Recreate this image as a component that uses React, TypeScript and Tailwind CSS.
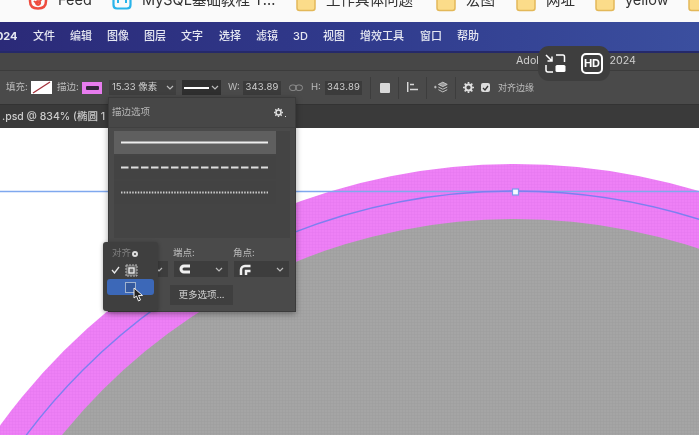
const cjk = "font-['Inter','Noto_Sans_CJK_SC',sans-serif]";

function Folder() {
  return (
    <svg width="20" height="12" viewBox="0 0 20 12" className="shrink-0">
      <path d="M1 -6 H19 V8 Q19 10.500 16.500 10.500 H3.500 Q1 10.500 1 8 Z" fill="#fbdc8a" stroke="#e3b859" strokeWidth="1.500" />
    </svg>
  );
}

function Bookmark({ icon, label, w }: { icon: React.ReactNode; label: string; w: string }) {
  return (
    <div className={`flex items-start gap-[10px] shrink-0 ${w}`}>
      {icon}
      <span className="text-[14.500px] leading-[15px] mt-[-8px] text-[#333] whitespace-nowrap">{label}</span>
    </div>
  );
}

function BookmarkBar() {
  return (
    <div className="h-[22px] bg-[#fafafa] flex pl-[28px] overflow-hidden">
      <Bookmark
        w="w-[84px]"
        label="Feed"
        icon={
          <svg width="20" height="10" viewBox="0 0 20 10" className="shrink-0">
            <path d="M2 -6 V1 Q2 8.500 10 8.500 Q18 8.500 18 1 V-6" fill="none" stroke="#ee4b3e" strokeWidth="2.500" />
            <path d="M6 1 Q10 6 14 -2 M10 1 a2 2 0 1 0 .1 0" fill="none" stroke="#ee4b3e" strokeWidth="2" />
          </svg>
        }
      />
      <Bookmark
        w="w-[184px]"
        label="MySQL基础教程 T..."
        icon={
          <svg width="20" height="10" viewBox="0 0 20 10" className="shrink-0">
            <path d="M1.500 -6 V5 Q1.500 8.500 5 8.500 H15 Q18.500 8.500 18.500 5 V-6" fill="none" stroke="#29b4ea" strokeWidth="2.200" />
            <path d="M6 0 V3 M14 0 V3" stroke="#29b4ea" strokeWidth="2" />
          </svg>
        }
      />
      <Bookmark w="w-[140px]" label="工作具体问题" icon={<Folder />} />
      <Bookmark w="w-[80px]" label="宏图" icon={<Folder />} />
      <Bookmark w="w-[79px]" label="网址" icon={<Folder />} />
      <Bookmark w="w-[93px]" label="yellow" icon={<Folder />} />
      <Folder />
    </div>
  );
}

const menus: [string, string][] = [
  ["文件", "w-[37px]"],
  ["编辑", "w-[37px]"],
  ["图像", "w-[37px]"],
  ["图层", "w-[37px]"],
  ["文字", "w-[38px]"],
  ["选择", "w-[37px]"],
  ["滤镜", "w-[37px]"],
  ["3D", "w-[30px]"],
  ["视图", "w-[37px]"],
  ["增效工具", "w-[60px]"],
  ["窗口", "w-[37px]"],
  ["帮助", "w-[37px]"],
];

function MenuBar() {
  return (
    <div className="h-[31px] bg-gradient-to-r from-[#2b2a78] via-[#303a8c] to-[#3b4f9f] border-b-2 border-[#25296a] flex items-center text-[#e6e8f2] text-[11px] font-medium">
      <span className="w-[33px] shrink-0 font-bold overflow-hidden">
        <span className="block ml-[-11px]">2024</span>
      </span>
      {menus.map(([m, w]) => (
        <span key={m} className={`${w} shrink-0 whitespace-nowrap`}>{m}</span>
      ))}
    </div>
  );
}

function OverlayPill() {
  return (
    <div className="absolute left-[538px] top-[46px] w-[72px] h-[35px] rounded-[11px] bg-[#3e3e3e] flex items-center justify-center gap-[15px]">
      <svg width="21" height="19" viewBox="0 0 21 19" fill="none" stroke="#fff" strokeWidth="1.500">
        <path d="M1 1 L7 7 M7 2.500 V7 H2.500" />
        <path d="M11 1 H18 Q19.500 1 19.500 3 V8" />
        <path d="M1 11 V16 Q1 18 3 18 H8" />
        <rect x="10.500" y="11" width="10" height="7" rx="1.500" fill="#fff" stroke="none" />
      </svg>
      <div className="w-[22px] h-[21px] border-2 border-white rounded-[5px] flex items-center justify-center text-white text-[11px] font-bold leading-none">
        HD
      </div>
    </div>
  );
}

function TitleStrip() {
  return (
    <div className="h-[18px] bg-[#474747] border-b border-[#3c3c3c] flex items-center pl-[516px] text-[10.700px] text-[#cfcfcf] whitespace-nowrap">
      Adobe Photoshop 2024
    </div>
  );
}

function Sep({ cls }: { cls: string }) {
  return <div className={`w-px h-[22px] bg-[#3d3d3d] shrink-0 ${cls}`} />;
}

function Chevron({ c = "#bbbbbb" }: { c?: string }) {
  return (
    <svg width="8" height="5" viewBox="0 0 8 5" fill="none" stroke={c} strokeWidth="1.200" className="shrink-0">
      <path d="M1 1 L4 4 L7 1" />
    </svg>
  );
}

function Num({ v, w }: { v: string; w: string }) {
  return (
    <div className={`${w} h-[14px] bg-[#3b3b3b] flex items-center justify-center text-[#d0d0d0] text-[9.500px] tracking-[0.2px] shrink-0`}>
      {v}
    </div>
  );
}

function OptionsBar() {
  return (
    <div className="h-[33px] bg-[#4a4a4a] flex items-center pl-[6px] text-[9.500px] text-[#bcbcbc] whitespace-nowrap">
      <span className="w-[25px] shrink-0">填充:</span>
      <svg width="21" height="13" viewBox="0 0 21 13" className="shrink-0">
        <rect width="21" height="13" fill="#fff" />
        <path d="M2 12 L19 1" stroke="#a3323c" strokeWidth="1.300" />
      </svg>
      <span className="w-[25px] ml-[5px] shrink-0">描边:</span>
      <div className="w-[20px] h-[12px] bg-[#e77cee] flex items-center justify-center shrink-0">
        <div className="w-[13px] h-[4px] bg-[#33263a] rounded-[1px]" />
      </div>
      <div className="ml-[7px] w-[67px] h-[15px] bg-[#3f3f3f] flex items-center text-[#cfcfcf] shrink-0">
        <span className="pl-[3px] w-[57px]">15.33 像素</span>
        <Chevron />
      </div>
      <div className="ml-[6px] w-[39px] h-[15px] bg-[#2f2f2f] flex items-center gap-[2px] pl-[2px] shrink-0">
        <div className="w-[25px] h-[2px] bg-white" />
        <Chevron />
      </div>
      <span className="ml-[7px] w-[15px] shrink-0">W:</span>
      <Num v="343.89" w="w-[38px]" />
      <svg width="14" height="8" viewBox="0 0 14 8" fill="none" stroke="#8f8f8f" strokeWidth="1" className="ml-[8px] shrink-0">
        <rect x="0.500" y="1" width="7" height="5.500" rx="2.700" />
        <rect x="6.500" y="1" width="7" height="5.500" rx="2.700" />
      </svg>
      <span className="ml-[8px] w-[14px] shrink-0">H:</span>
      <Num v="343.89" w="w-[37px]" />
      <Sep cls="ml-[8px]" />
      <div className="ml-[9px] w-[10px] h-[10px] bg-[#d9d9d9] rounded-[1px] shrink-0" />
      <Sep cls="ml-[8px]" />
      <svg width="12" height="11" viewBox="0 0 12 11" fill="none" stroke="#d8d8d8" className="ml-[8px] shrink-0">
        <path d="M0.700 0 V10 M3 2.500 H7 M3 7.500 H11" strokeWidth="1.500" />
      </svg>
      <Sep cls="ml-[7px]" />
      <svg width="15" height="13" viewBox="0 0 17 13" fill="none" stroke="#d0d0d0" strokeWidth="1" className="ml-[7px] shrink-0">
        <path d="M0 6 H3 M1.500 4.500 V7.500" />
        <path d="M5 3 L10 0.500 L15 3 L10 5.500 Z" fill="#9a9a9a" />
        <path d="M5 6 L10 8.500 L15 6 M5 9 L10 11.500 L15 9" />
      </svg>
      <Sep cls="ml-[6px] mr-[7px]" />
      <Gear size={11} />
      <div className="ml-[7px] w-[9px] h-[9px] bg-[#dcdcdc] rounded-[2px] flex items-center justify-center shrink-0">
        <svg width="7" height="6" viewBox="0 0 7 6" fill="none" stroke="#333" strokeWidth="1.300">
          <path d="M1 3 L3 5 L6 1" />
        </svg>
      </div>
      <span className="ml-[8px] text-[9px] shrink-0">对齐边缘</span>
    </div>
  );
}

function Gear({ size }: { size: number }) {
  return (
    <svg width={size} height={size} viewBox="0 0 12 12" className="shrink-0">
      <circle cx="6" cy="6" r="3.300" fill="none" stroke="#e0e0e0" strokeWidth="2" />
      <path d="M6 0 V2 M6 10 V12 M0 6 H2 M10 6 H12 M1.800 1.800 L3.200 3.200 M8.800 8.800 L10.200 10.200 M1.800 10.200 L3.200 8.800 M8.800 3.200 L10.200 1.800" stroke="#e0e0e0" strokeWidth="1.800" />
    </svg>
  );
}

function TabBar() {
  return (
    <div className="h-[24px] bg-[#3a3a3a] border-t border-[#333] flex items-center pl-[2px] text-[10.500px] font-medium text-[#cdcdcd] whitespace-nowrap overflow-hidden">
      .psd @ 834% (椭圆 1 拷贝, RGB/8#)
    </div>
  );
}

function Canvas() {
  return (
    <svg width="699" height="308" viewBox="0 127 699 308" className="block">
      <defs>
        <pattern id="g" width="3" height="3" patternUnits="userSpaceOnUse">
          <rect width="3" height="3" fill="#a5a5a5" />
          <path d="M0 0 H3 M0 0 V3" stroke="#9a9a9a" strokeWidth="0.800" />
        </pattern>
        <pattern id="p" width="3" height="3" patternUnits="userSpaceOnUse">
          <rect width="3" height="3" fill="#ee80f6" />
          <path d="M0 0 H3 M0 0 V3" stroke="#e276ee" strokeWidth="0.700" />
        </pattern>
      </defs>
      <rect x="0" y="127" width="699" height="308" fill="#fff" />
      <circle cx="515" cy="801" r="638" fill="url(#p)" />
      <circle cx="515" cy="801" r="583" fill="url(#g)" />
      <path d="M0 190.500 H699" stroke="#7fa8ee" strokeWidth="1.500" />
      <circle cx="515" cy="801" r="611" fill="none" stroke="#7d7ff0" strokeWidth="1.400" />
      <rect x="512.500" y="188" width="6" height="6" fill="#f4fbff" stroke="#7a9bec" strokeWidth="1.200" />
    </svg>
  );
}

function StrokeRow({ active, children }: { active?: boolean; children: React.ReactNode }) {
  return (
    <div className={`h-[23px] flex items-center px-[7px] ${active ? "bg-[#5f5f5f]" : "bg-[#434343]"}`}>
      {children}
    </div>
  );
}

function StrokeLine({ dash, width, color }: { dash?: string; width: number; color: string }) {
  return (
    <svg width="147" height="3" viewBox="0 0 147 3" className="block">
      <path d="M0 1.500 H147" stroke={color} strokeWidth={width} strokeDasharray={dash} />
    </svg>
  );
}

function PanelSelect({ w, children }: { w: string; children: React.ReactNode }) {
  return (
    <div className={`${w} h-[16px] bg-[#3d3d3d] flex items-center justify-between px-[5px] shrink-0`}>
      {children}
      <Chevron />
    </div>
  );
}

function StrokePanel() {
  return (
    <div className="absolute left-[108px] top-[97px] w-[188px] h-[215px] bg-[#4a4a4a] border border-[#3b3b3b] shadow-[0_2px_6px_rgba(0,0,0,0.35)] text-[9.500px] text-[#b4b4b4]">
      <div className="h-[30px] flex items-start justify-between pt-[7px] pl-[3px] pr-[9px] bg-[#474747] border-b border-[#404040]">
        <span>描边选项</span>
        <span className="flex items-end gap-[2px] mt-[3px]">
          <Gear size={9} />
          <span className="w-px h-px bg-[#ddd]" />
        </span>
      </div>
      <div className="mx-[5px] mt-[3px] h-[107px] bg-[#444444] pr-[14px] flex flex-col gap-[2px]">
        <StrokeRow active>
          <StrokeLine width={2} color="#eeeeee" />
        </StrokeRow>
        <StrokeRow>
          <StrokeLine width={2} color="#dddddd" dash="7.500 2.500" />
        </StrokeRow>
        <StrokeRow>
          <StrokeLine width={2} color="#cccccc" dash="1.500 1.300" />
        </StrokeRow>
      </div>
      <div className="mt-[8px] flex pl-[64px] gap-[20px] text-[#b9b9b9]">
        <span className="w-[40px]">端点:</span>
        <span>角点:</span>
      </div>
      <div className="mt-[1px] flex pl-[5px] gap-[6px]">
        <PanelSelect w="w-[54px] justify-end">
          <span />
        </PanelSelect>
        <PanelSelect w="w-[54px]">
          <svg width="12" height="10" viewBox="0 0 12 10">
            <path d="M11 2 H5 A3 3 0 0 0 5 8 H11" fill="none" stroke="#f0f0f0" strokeWidth="3" />
          </svg>
        </PanelSelect>
        <PanelSelect w="w-[55px]">
          <svg width="12" height="11" viewBox="0 0 12 11">
            <path d="M2 11 V6 A4 4 0 0 1 6 2 H11.500 M7 11 V7 H11.500" fill="none" stroke="#f0f0f0" strokeWidth="2.500" />
          </svg>
        </PanelSelect>
      </div>
      <div className="mt-[8px] ml-[61px] w-[63px] h-[20px] bg-[#3f3f3f] flex items-center justify-center text-[#d0d0d0]">
        更多选项...
      </div>
    </div>
  );
}

function AlignMenu() {
  return (
    <div className="absolute left-[103px] top-[242px] w-[55px] h-[69px] rounded-[3px] bg-[#3f3f3f] shadow-[0_1px_4px_rgba(0,0,0,0.3)] pt-[5px] text-[9.500px] text-[#7f7f7f]">
      <div className="flex items-center h-[13px] pl-[9px] gap-[1px]">
        <span>对齐</span>
        <span className="w-[6px] h-[6px] border-2 border-[#dddddd] rounded-full" />
      </div>
      <div className="flex items-center h-[16px] mt-[2px] pl-[8px]">
        <svg width="9" height="8" viewBox="0 0 9 8" fill="none" stroke="#e8e8e8" strokeWidth="1.300" className="shrink-0">
          <path d="M1 4 L3.500 7 L8 1" />
        </svg>
        <svg width="13" height="13" viewBox="0 0 13 13" fill="none" className="ml-[5px] shrink-0">
          <rect x="1" y="1" width="11" height="11" fill="#6a6a6a" stroke="#b8b8b8" strokeDasharray="2 1" />
          <rect x="4" y="4" width="5" height="5" fill="none" stroke="#eeeeee" strokeWidth="1.300" />
        </svg>
      </div>
      <div className="mt-[1px] mx-[4px] h-[16px] rounded-[3px] bg-[#3c68b8] flex items-center pl-[18px]">
        <div className="w-[11px] h-[11px] border border-[#9fb2cf] bg-[#355a9e]" />
      </div>
    </div>
  );
}

function Cursor() {
  return (
    <svg width="11" height="16" viewBox="0 0 11 16" className="absolute left-[133px] top-[287px]">
      <path d="M1 1 L1 11 L3.500 9 L5.500 14 L7.500 13 L5.500 8.500 L9.500 8.500 Z" fill="#222" stroke="#eee" strokeWidth="1" />
    </svg>
  );
}

export default function App() {
  return (
    <div className={`relative w-[699px] h-[435px] overflow-hidden bg-white blur-[0.4px] ${cjk}`}>
      <BookmarkBar />
      <MenuBar />
      <TitleStrip />
      <OptionsBar />
      <TabBar />
      <Canvas />
      <StrokePanel />
      <AlignMenu />
      <Cursor />
      <OverlayPill />
    </div>
  );
}
